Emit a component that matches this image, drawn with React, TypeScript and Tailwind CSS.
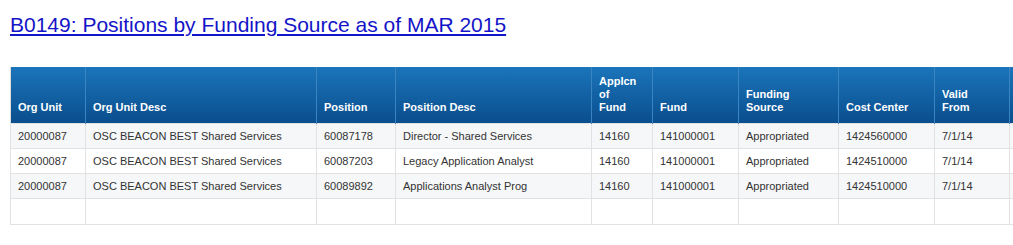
const columns = [
  { label: "Org Unit", width: "w-[75px]" },
  { label: "Org Unit Desc", width: "w-[231px]" },
  { label: "Position", width: "w-[79px]" },
  { label: "Position Desc", width: "w-[196px]" },
  { label: "Applcn of Fund", width: "w-[61px]", lines: ["Applcn", "of", "Fund"] },
  { label: "Fund", width: "w-[86px]" },
  { label: "Funding Source", width: "w-[100px]", lines: ["Funding", "Source"] },
  { label: "Cost Center", width: "w-[96px]" },
  { label: "Valid From", width: "w-[75px]", lines: ["Valid", "From"] },
  { label: "", width: "w-[80px]" },
];

const rows = [
  ["20000087", "OSC BEACON BEST Shared Services", "60087178", "Director - Shared Services", "14160", "141000001", "Appropriated", "1424560000", "7/1/14", ""],
  ["20000087", "OSC BEACON BEST Shared Services", "60087203", "Legacy Application Analyst", "14160", "141000001", "Appropriated", "1424510000", "7/1/14", ""],
  ["20000087", "OSC BEACON BEST Shared Services", "60089892", "Applications Analyst Prog", "14160", "141000001", "Appropriated", "1424510000", "7/1/14", ""],
  ["", "", "", "", "", "", "", "", "", ""],
];

export default function App() {
  return (
    <div className="w-[1013px] h-[245px] bg-white overflow-hidden font-['Liberation_Sans',Arial,sans-serif]">
      <div className="pl-[10px] pt-[13px] text-[21px] leading-[24px] h-[37px]">
        <a href="#" className="text-[#1414c8] underline underline-offset-[2px]">
          B0149: Positions by Funding Source as of MAR 2015
        </a>
      </div>

      <div className="ml-[10px] mt-[30px] overflow-hidden">
        <table className="table-fixed border-collapse w-[1079px]">
          <thead>
            <tr className="h-[56px] bg-gradient-to-b from-[#1b75bb] to-[#0a4e8d]">
              {columns.map((col, i) => (
                <th
                  key={i}
                  className={`${col.width} align-bottom text-left pl-[7px] pr-1 pb-[9px] text-[11px] leading-[13px] font-bold text-white border-x border-[#3a84c2] first:border-l-[#dcdcdc]`}
                >
                  {col.lines
                    ? col.lines.map((l) => <div key={l}>{l}</div>)
                    : col.label}
                </th>
              ))}
            </tr>
          </thead>
          <tbody>
            {rows.map((row, r) => (
              <tr
                key={r}
                className={`${r === 3 ? "h-[26px]" : "h-[25px]"} ${r % 2 === 0 ? "bg-[#f6f7f9]" : "bg-white"}`}
              >
                {row.map((cell, c) => (
                  <td
                    key={c}
                    className="align-middle pl-[7px] pr-1 pt-[2px] text-[11px] leading-[13px] text-[#333333] border border-[#e2e2e2] whitespace-nowrap"
                  >
                    {cell}
                  </td>
                ))}
              </tr>
            ))}
          </tbody>
        </table>
      </div>
    </div>
  );
}
